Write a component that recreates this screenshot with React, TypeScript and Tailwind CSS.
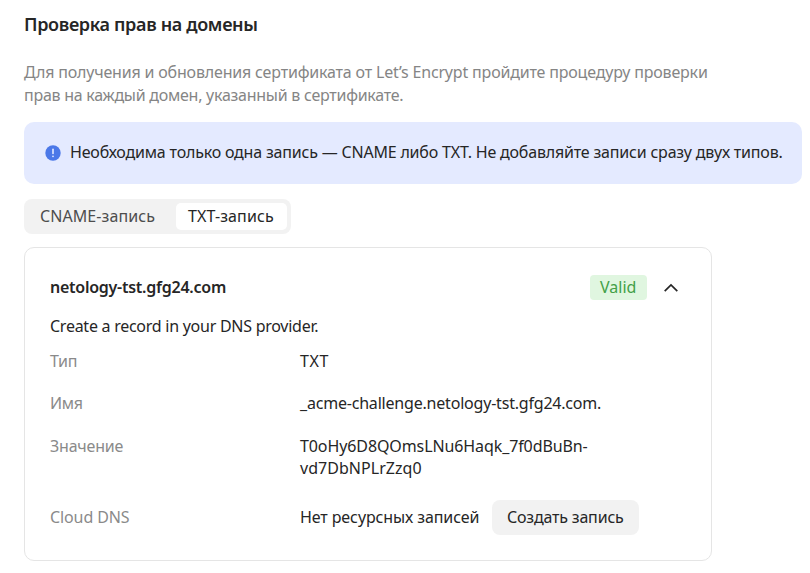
import type { ReactNode } from "react";

function Row({ label, height, children }: { label: ReactNode; height: string; children: ReactNode }) {
  return (
    <div className={`flex items-start ${height}`}>
      <dt className="w-[250px] shrink-0 text-[#8a8a8a]">{label}</dt>
      <dd>{children}</dd>
    </div>
  );
}

export default function App() {
  return (
    <main className="h-[573px] w-[810px] overflow-hidden bg-white pl-6 font-['Noto_Sans','Open_Sans',sans-serif] text-base leading-[22px] whitespace-nowrap text-[#262626]">
      <h1 className="pt-3 text-[18px] leading-6 font-semibold"><span className="tracking-[-0.34px]">Проверка прав на домены</span></h1>
      <p className="mt-[25px] leading-[23px] text-[#858585]">
        <span className="tracking-[-0.18px]">Для получения и обновления сертификата от Let’s Encrypt пройдите процедуру проверки</span>
        <br />
        <span className="tracking-[-0.26px]">прав на каждый домен, указанный в сертификате.</span>
      </p>
      <section className="mt-[15px] flex h-[62px] w-[778px] items-center rounded-[10px] bg-[#e4eaff] pl-[21px]">
        <svg className="mr-[9px] h-4 w-4 shrink-0" viewBox="0 0 16 16" fill="none">
          <circle cx="8" cy="8" r="7.7" fill="#4b78e8" />
          <path d="M8 4.3v4.2" stroke="#e4eaff" strokeWidth="1.6" strokeLinecap="round" />
          <circle cx="8" cy="11.3" r=".9" fill="#e4eaff" />
        </svg>
        <span className="pb-0.5 tracking-[-0.19px]">Необходима только одна запись — CNAME либо TXT. Не добавляйте записи сразу двух типов.</span>
      </section>
      <div className="mt-[15px] flex h-[35px] w-[267px] rounded-lg bg-[#f2f2f2] p-1">
        <button className="w-[148px] pb-0.5 pl-3 text-left text-[#4d4d4d]"><span className="tracking-[0.08px]">CNAME-запись</span></button>
        <button className="w-[111px] rounded-[5px] bg-white pb-0.5 pl-3 text-left"><span className="tracking-[0.12px]">TXT-запись</span></button>
      </div>
      <article className="mt-[13px] h-[314px] w-[688px] rounded-[10px] border border-[#e5e5e5] pl-[25px]">
        <header className="mt-[27px] flex h-[25px] items-center">
          <h2 className="w-[540px] pb-0.5 font-semibold"><span className="tracking-[-0.25px]">netology-tst.gfg24.com</span></h2>
          <span className="flex h-[25px] w-[57px] items-center rounded-[4px] bg-[#e0f6e0] pb-0.5 pl-[10px] text-[#43a047]"><span>Valid</span></span>
          <svg className="ml-4 h-4 w-4" viewBox="0 0 16 16" fill="none" stroke="#262626" strokeWidth="1.7">
            <path d="M1.7 11.2 8 4.9l6.3 6.3" />
          </svg>
        </header>
        <p className="mt-[15px]"><span className="tracking-[-0.26px]">Create a record in your DNS provider.</span></p>
        <dl className="mt-[13px]">
          <Row label={<span className="tracking-[-0.3px]">Тип</span>} height="h-[42px]"><span className="tracking-[0.6px]">TXT</span></Row>
          <Row label={<span className="tracking-[-0.3px]">Имя</span>} height="h-[43px]"><span className="tracking-[-0.2px]">_acme-challenge.netology-tst.gfg24.com.</span></Row>
          <Row label={<span className="tracking-[-0.2px]">Значение</span>} height="h-[71px]">
            <span className="tracking-[-0.1px]">T0oHy6D8QOmsLNu6Haqk_7f0dBuBn-</span>
            <br />
            <span className="tracking-[0.04px]">vd7DbNPLrZzq0</span>
          </Row>
          <Row label={<span className="tracking-[-0.1px]">Cloud DNS</span>} height="h-[22px]">
            <div className="flex h-[22px] items-center">
              <span className="w-[192px] tracking-[-0.1px]">Нет ресурсных записей</span>
              <button className="h-[35px] w-[147px] rounded-lg bg-[#f2f2f2] pl-[15px] text-left"><span className="tracking-[-0.19px]">Создать запись</span></button>
            </div>
          </Row>
        </dl>
      </article>
    </main>
  );
}
